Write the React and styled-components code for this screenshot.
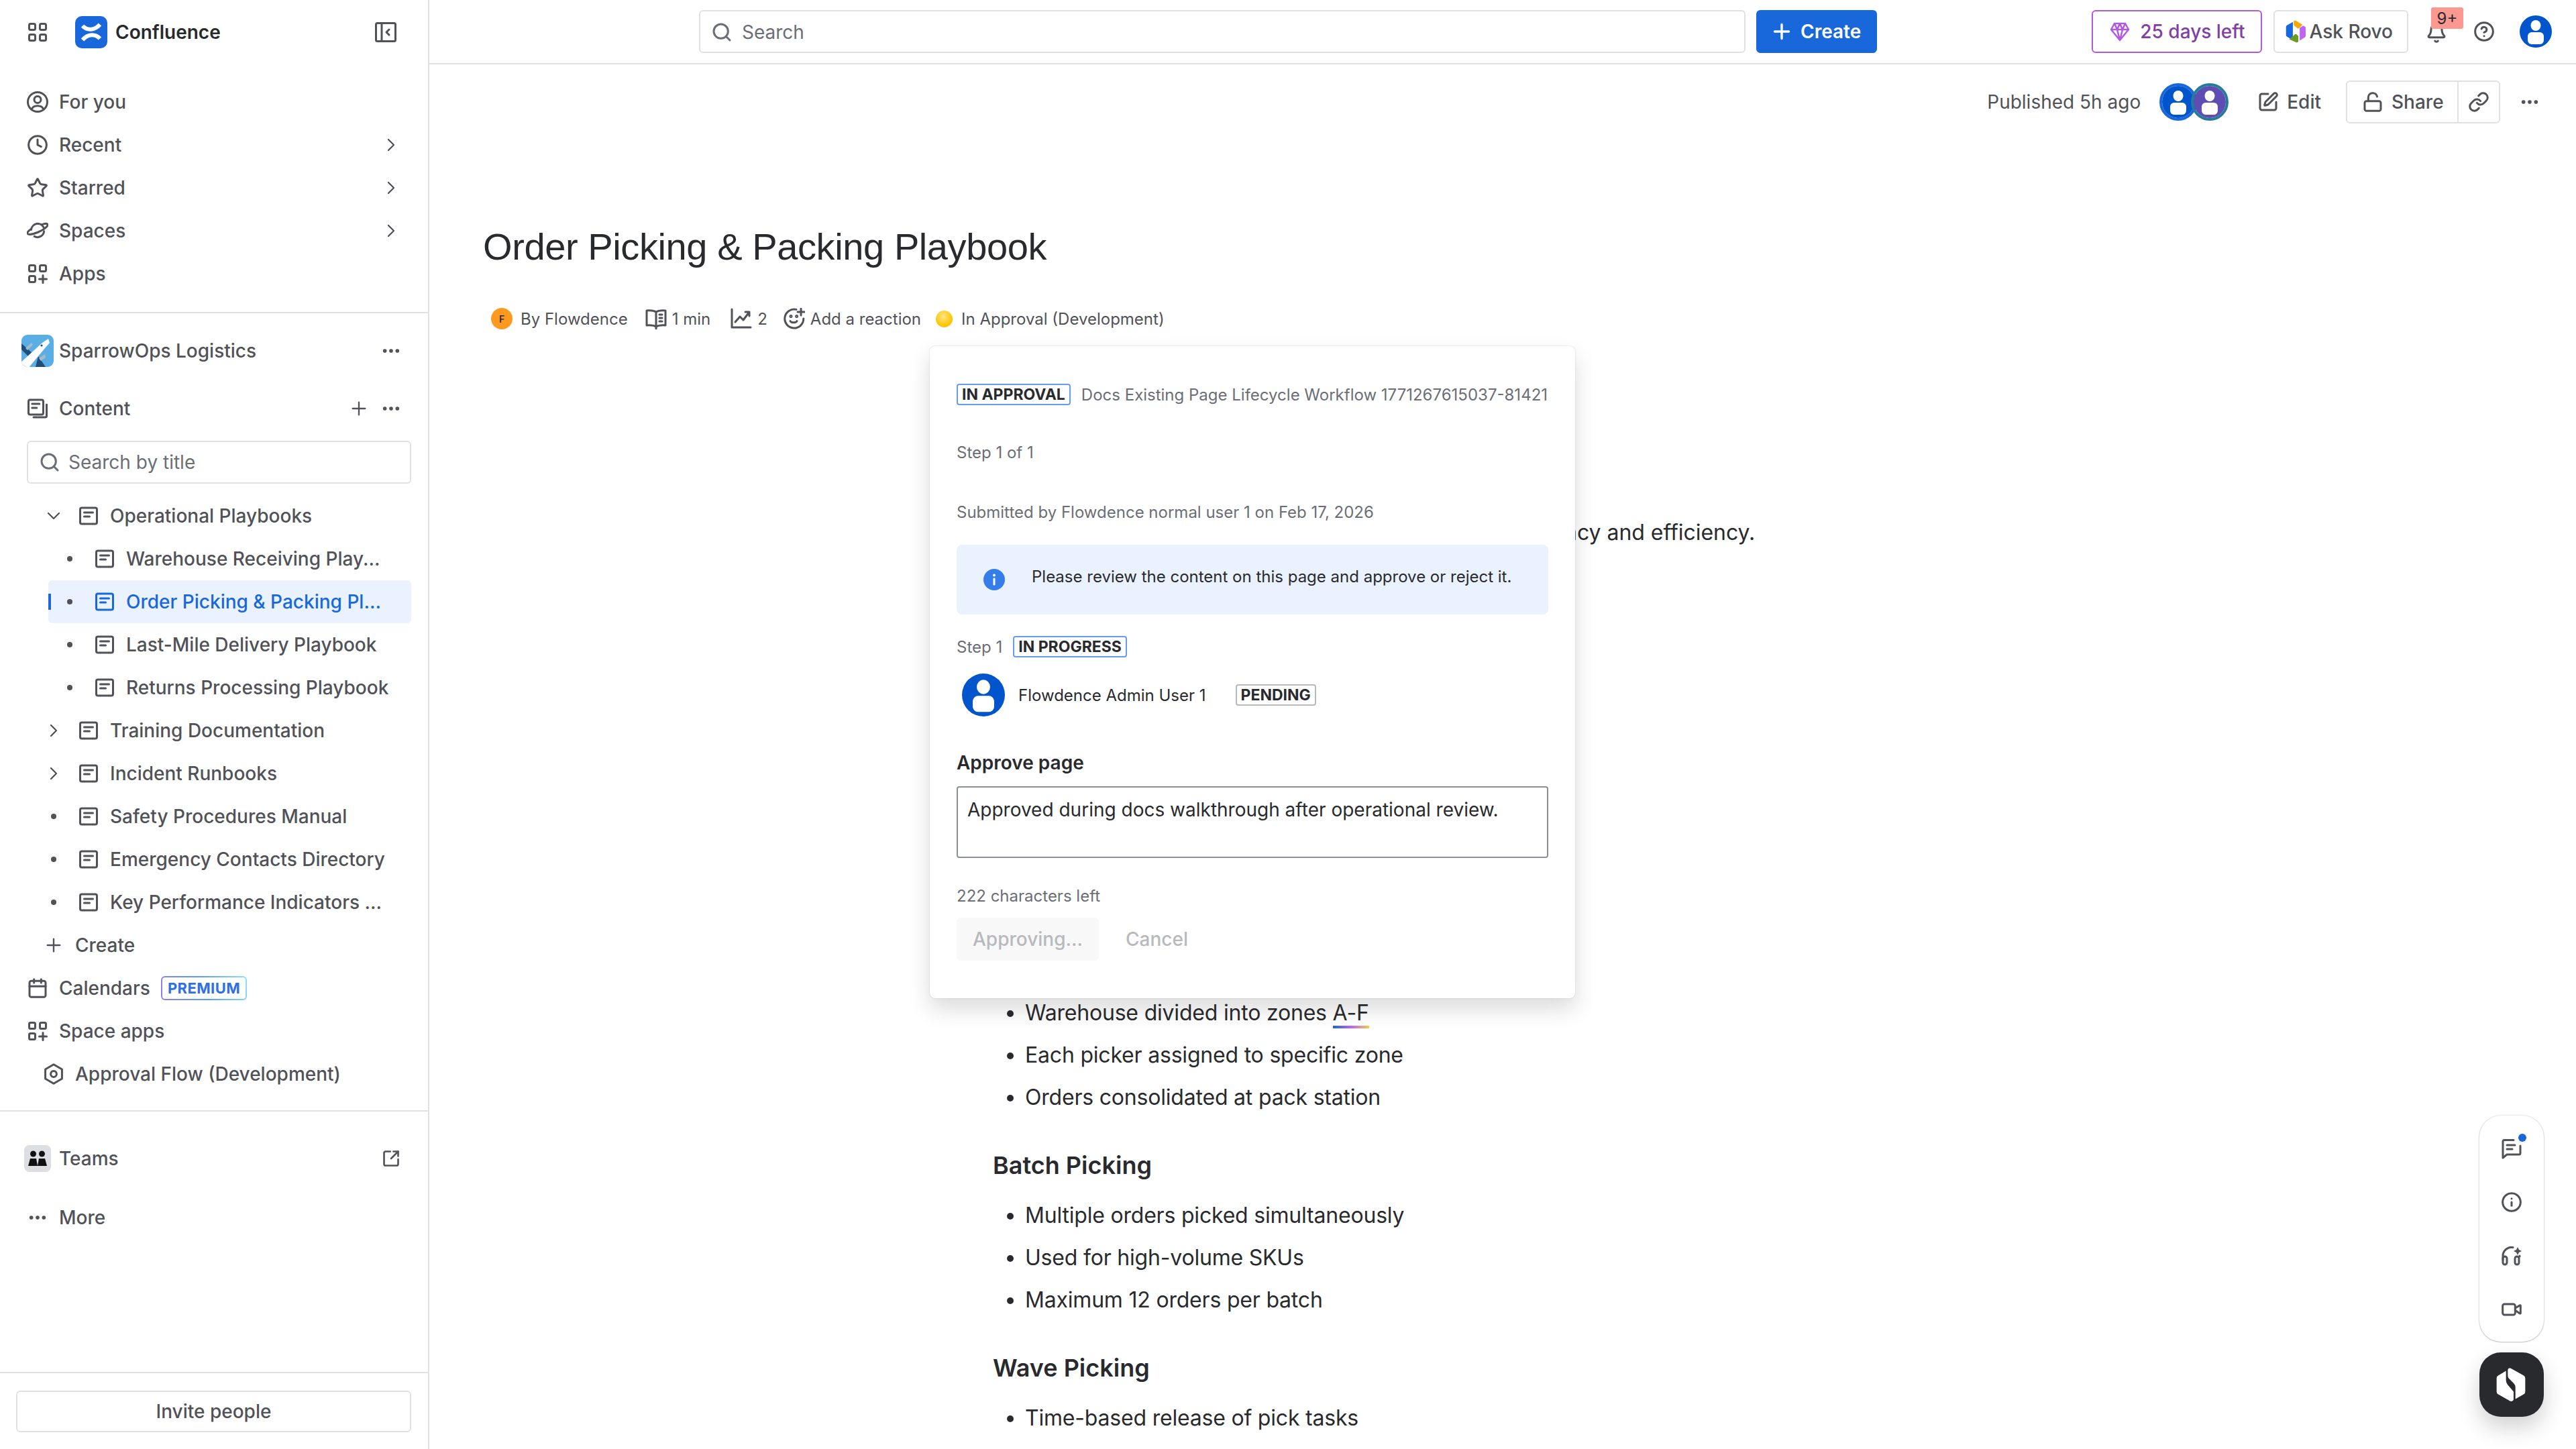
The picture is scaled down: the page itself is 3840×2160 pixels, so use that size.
import React from "react";
import styled, { createGlobalStyle } from "styled-components";
import {
  Bell,
  Calendar,
  ChevronDown,
  ChevronRight,
  CircleHelp,
  Clock,
  Ellipsis,
  Info,
  Link,
  LockOpen,
  Plus,
  Search,
  SquareArrowOutUpRight,
  SquarePen,
  Star,
  Video,
} from "lucide-react";

const GlobalStyle = createGlobalStyle`
  html, body {
    margin: 0;
    background: #fff;
  }
  body {
    font-family: Inter, "Noto Sans", sans-serif;
    color: #292a2e;
  }
  * {
    box-sizing: border-box;
  }
`;

const Shell = styled.div`
  display: flex;
  width: 3840px;
  height: 2160px;
  overflow: hidden;
`;

/* ---- sidebar ---- */
const Sidebar = styled.aside`
  display: flex;
  flex-direction: column;
  flex: 0 0 640px;
  height: 100%;
  border-right: 2px solid #dfe1e4;
  color: #505258;
  font-size: 28px;
  font-weight: 500;
`;

const Brand = styled.div`
  display: flex;
  align-items: center;
  height: 96px;
  padding: 0 47px 0 40px;
`;

const LogoName = styled.span`
  margin-left: 12px;
  font-size: 28px;
  font-weight: 600;
  color: #292a2e;
`;

const LogoBox = styled.svg`
  width: 48px;
  height: 48px;
  margin-left: 40px;
`;

const Spacer = styled.div`
  flex: 1;
`;

const NavList = styled.nav`
  padding-top: 24px;
  padding-bottom: 25px;
  border-bottom: 2px solid #dfe1e4;
`;

const Row = styled.div`
  display: flex;
  align-items: center;
  gap: 16px;
  height: 64px;
  padding: 0 ${(p) => p.$right || 39}px 0 ${(p) => (p.$sub ? 64 : 40)}px;
  white-space: nowrap;
`;

const RowEnd = styled.span`
  display: flex;
  gap: 16px;
  margin-left: auto;
`;

const SpaceBlock = styled.div`
  padding-top: 24px;
  flex: 0 0 1190px;
  border-bottom: 2px solid #dfe1e4;
`;

const SpaceRow = styled(Row)`
  padding-left: 32px;
  gap: 8px;
  margin-bottom: 22px;
`;

const TitleSearch = styled.div`
  display: flex;
  align-items: center;
  gap: 12px;
  height: 64px;
  margin: 16px 25px 16px 40px;
  padding: 0 16px;
  border: 2px solid #dfe1e4;
  border-radius: 6px;
  color: #6b6e76;
  font-weight: 400;
`;

const Tree = styled.div`
  padding: 0 25px 0 64px;
`;

const TreeRow = styled.div`
  position: relative;
  display: flex;
  align-items: center;
  height: 64px;
  padding-left: ${(p) => p.$depth * 24 + (p.$active ? -8 : 0)}px;
  margin-left: ${(p) => (p.$active ? 8 : 0)}px;
  border-radius: 6px;
  white-space: nowrap;
  background: ${(p) => (p.$active ? "#e9f2fe" : "transparent")};
  color: ${(p) => (p.$active ? "#1868db" : "inherit")};

  &::before {
    content: "";
    display: ${(p) => (p.$active ? "block" : "none")};
    position: absolute;
    left: 0;
    top: 20px;
    width: 4px;
    height: 24px;
    background: #1868db;
  }
`;

const TreeSlot = styled.span`
  display: flex;
  align-items: center;
  justify-content: center;
  width: 32px;
  margin-right: 20px;
  color: #505258;
`;

const Dot = styled.i`
  width: 8px;
  height: 8px;
  border-radius: 50%;
  background: #505258;
`;

const TreeText = styled.span`
  margin-left: 16px;
`;

const CreateRow = styled(TreeRow)`
  gap: 16px;
`;

const Premium = styled.span`
  display: inline-flex;
  align-items: center;
  height: 36px;
  padding: 0 8px;
  border: 2px solid transparent;
  border-radius: 6px;
  background: linear-gradient(#fff, #fff) padding-box,
    linear-gradient(70deg, #8f7ee7, #579dff 50%, #8be3f5) border-box;
  font-size: 22px;
  font-weight: 700;
  letter-spacing: 0.4px;
  color: #2f6fe8;
`;

const BottomBlock = styled.div`
  display: flex;
  flex-direction: column;
  flex: 1;
  padding-top: 38px;
`;

const TeamsBadge = styled.span`
  display: flex;
  align-items: center;
  justify-content: center;
  width: 40px;
  height: 40px;
  margin: 0 -4px;
  border-radius: 8px;
  background: #dddee1;
`;

const MoreRow = styled(Row)`
  margin-top: 24px;
`;

const InviteBar = styled.div`
  margin-top: auto;
  padding: 26px 25px 25px 24px;
  border-top: 2px solid #dfe1e4;
`;

const OutlineButton = styled.div`
  display: flex;
  align-items: center;
  justify-content: center;
  height: 62px;
  border: 2px solid #dfe1e4;
  border-radius: 6px;
  color: #505258;
`;

/* ---- main ---- */
const Main = styled.main`
  position: relative;
  flex: 1;
  min-width: 0;
`;

const TopBar = styled.header`
  display: flex;
  align-items: center;
  height: 96px;
  padding: 0 36px 0 402px;
  border-bottom: 2px solid #dfe1e4;
`;

const GlobalSearch = styled.div`
  display: flex;
  align-items: center;
  gap: 14px;
  width: 1560px;
  height: 64px;
  padding: 2px 16px 0;
  border: 2px solid #dfe1e4;
  border-radius: 6px;
  color: #6b6e76;
  font-size: 28px;
`;

const CreateButton = styled.div`
  display: flex;
  align-items: center;
  gap: 10px;
  width: 180px;
  height: 64px;
  margin-left: 16px;
  padding-left: 20px;
  border-radius: 6px;
  background: #1868db;
  color: #fff;
  font-size: 28px;
  font-weight: 600;
`;

const TopActions = styled.div`
  display: flex;
  align-items: center;
  margin-left: auto;
`;

const TopButton = styled.div`
  display: flex;
  align-items: center;
  gap: ${(p) => p.$gap}px;
  height: 64px;
  padding: 0 ${(p) => p.$right}px 0 ${(p) => p.$left}px;
  margin-right: 17px;
  border: 2px solid ${(p) => (p.$trial ? "#af59e1" : "#dfe1e4")};
  border-radius: 6px;
  color: ${(p) => (p.$trial ? "#803fa5" : "#505258")};
  font-size: 28px;
  font-weight: 500;
  white-space: nowrap;
`;

const BellWrap = styled.span`
  position: relative;
  display: flex;
  margin: 4px 39px 0 9px;
  color: #505258;
`;

const BellBadge = styled.span`
  position: absolute;
  left: 8px;
  top: -22px;
  display: flex;
  align-items: center;
  justify-content: center;
  width: 48px;
  height: 32px;
  background: #fd9891;
  border-radius: 3px;
  color: #292a2e;
  font-size: 24px;
`;

const HelpIcon = styled.span`
  display: flex;
  margin-right: 37px;
  color: #505258;
`;

const PageActions = styled.div`
  display: flex;
  align-items: center;
  justify-content: flex-end;
  height: 64px;
  margin-top: 24px;
  padding-right: 53px;
  color: #505258;
  font-size: 28px;
  font-weight: 400;
`;

const Avatars = styled.div`
  display: flex;
  margin: 0 43px 0 28px;
`;

const AvatarRing = styled.span`
  display: flex;
  width: 56px;
  height: 56px;
  border-radius: 50%;
  border: 4px solid ${(p) => p.$ring};
  margin-left: ${(p) => (p.$second ? -9 : 0)}px;
`;

const EditAction = styled.div`
  display: flex;
  align-items: center;
  gap: 12px;
  margin-right: 37px;
  font-weight: 500;
`;

const ShareGroup = styled.div`
  display: flex;
  align-items: center;
  width: 230px;
  height: 64px;
  border: 2px solid #dfe1e4;
  border-radius: 6px;
  font-weight: 500;
`;

const ShareMain = styled.div`
  display: flex;
  align-items: center;
  gap: 12px;
  width: 166px;
  height: 100%;
  padding-left: 22px;
  border-right: 2px solid #dfe1e4;
`;

const ShareLink = styled.div`
  display: flex;
  justify-content: center;
  flex: 1;
`;

const MoreAction = styled.div`
  display: flex;
  margin-left: 28px;
`;

const Article = styled.article`
  padding-left: 80px;
`;

const Title = styled.h1`
  margin: 148px 0 0;
  font-size: 56px;
  line-height: 72px;
  font-weight: 400;
  letter-spacing: -0.4px;
  color: #292a2e;
  font-family: "Liberation Sans", Arial, sans-serif;
`;

const Meta = styled.div`
  display: flex;
  align-items: center;
  height: 40px;
  margin-top: 51px;
  padding-left: 12px;
  color: #505258;
  font-size: 24px;
  white-space: nowrap;
`;

const MetaItem = styled.span`
  display: flex;
  align-items: center;
  gap: ${(p) => p.$gap}px;
  margin-right: ${(p) => p.$after}px;
`;

const AuthorDot = styled.span`
  display: flex;
  align-items: center;
  justify-content: center;
  width: 32px;
  height: 32px;
  border-radius: 50%;
  background: #ff991f;
  color: #292a2e;
  font-size: 14px;
  font-weight: 600;
`;

const StatusDot = styled.span`
  width: 25px;
  height: 25px;
  border-radius: 50%;
  background: radial-gradient(circle at 45% 35%, #ffe680, #fcc400 65%);
`;

const Body = styled.div`
  margin-left: 760px;
  font-size: 32px;
  line-height: 48px;
  letter-spacing: -0.2px;
  color: #292a2e;
`;

const Intro = styled.p`
  margin: 275px 0 0;
  white-space: nowrap;
  letter-spacing: -0.04px;
`;

const BulletList = styled.ul`
  margin: ${(p) => p.$top}px 0 0;
  padding: 0 0 0 48px;
  list-style: disc;
`;

const BulletItem = styled.li`
  height: 63px;
  padding-top: 7px;
`;

const Section = styled.h2`
  margin: ${(p) => p.$top}px 0 0;
  font-size: 36px;
  line-height: 48px;
  font-weight: 600;
  letter-spacing: 0;
`;

const Spell = styled.span`
  position: relative;

  &::after {
    content: "";
    position: absolute;
    left: 0;
    right: 0;
    bottom: -4px;
    height: 4px;
    background: linear-gradient(90deg, #1868db, #bf63f3 50%, #f5cd47);
  }
`;

/* ---- approval popup ---- */
const Popup = styled.section`
  position: absolute;
  left: 746px;
  top: 516px;
  width: 962px;
  height: 972px;
  padding: 56px 40px;
  border-radius: 8px;
  background: #fff;
  box-shadow: 0 0 2px rgba(30, 31, 33, 0.2), 0 16px 32px rgba(30, 31, 33, 0.16);
  font-size: 24px;
  color: #6b6e76;
`;

const FlexLine = styled.div`
  display: flex;
  align-items: center;
  gap: ${(p) => p.$gap}px;
  margin-top: ${(p) => p.$top || 0}px;
  white-space: nowrap;
`;

const Lozenge = styled.span`
  display: inline-flex;
  align-items: center;
  height: 32px;
  padding: 0 6px;
  margin-left: ${(p) => p.$shift || 0}px;
  border: 2px solid ${(p) => (p.$neutral ? "#b7b9be" : "#669df1")};
  border-radius: 4px;
  color: #292a2e;
  font-size: 23px;
  font-weight: 700;
`;

const Note = styled.div`
  margin-top: ${(p) => p.$top}px;
  line-height: 36px;
`;

const InfoPanel = styled.div`
  display: flex;
  align-items: flex-start;
  gap: 40px;
  height: 104px;
  margin-top: 30px;
  padding: 28px 40px 0;
  border-radius: 8px;
  background: #e9f2fe;
  color: #292a2e;
  line-height: 40px;
  white-space: nowrap;
`;

const InfoDot = styled.span`
  display: flex;
  margin-top: 8px;
`;

const ApproverRow = styled(FlexLine)`
  height: 64px;
  padding-left: 8px;
  color: #292a2e;
`;

const PopupHeading = styled.div`
  margin-top: 49px;
  font-size: 28px;
  line-height: 40px;
  font-weight: 600;
  color: #292a2e;
`;

const CommentBox = styled.div`
  height: 107px;
  margin-top: 15px;
  padding: 13px 14px;
  border: 2px solid #8c8f97;
  border-radius: 4px;
  color: #292a2e;
  font-size: 28px;
  line-height: 40px;
`;

const PopupActions = styled.div`
  display: flex;
  align-items: center;
  margin-top: 14px;
  color: #b7b9be;
  font-size: 28px;
  font-weight: 500;
`;

const DisabledButton = styled.div`
  display: flex;
  align-items: center;
  justify-content: center;
  width: 212px;
  height: 64px;
  margin-right: 40px;
  border-radius: 6px;
  background: #f8f8f8;
`;

/* ---- floating tools ---- */
const ToolRail = styled.div`
  position: absolute;
  right: 48px;
  top: 1663px;
  display: flex;
  flex-direction: column;
  align-items: center;
  width: 96px;
  height: 337px;
  padding-top: 9px;
  border-radius: 32px;
  background: #fff;
  box-shadow: 0 0 2px rgba(30, 31, 33, 0.3), 0 1px 2px rgba(30, 31, 33, 0.2);
  color: #505258;
`;

const Tool = styled.span`
  position: relative;
  display: flex;
  align-items: center;
  justify-content: center;
  height: 80px;
`;

const ToolDot = styled.i`
  position: absolute;
  right: -6px;
  top: 18px;
  width: 12px;
  height: 12px;
  border-radius: 50%;
  background: #1868db;
`;

const RovoFab = styled.div`
  position: absolute;
  right: 48px;
  top: 2016px;
  display: flex;
  align-items: center;
  justify-content: center;
  width: 96px;
  height: 96px;
  border-radius: 32px;
  background: #292a2e;
  box-shadow: 0 16px 32px rgba(30, 31, 33, 0.2);
`;

/* ---- icons ---- */
const Glyph = styled.svg`
  flex: none;
  width: ${(p) => p.$size || 32}px;
  height: ${(p) => p.$size || 32}px;
  fill: none;
  stroke: currentColor;
  stroke-width: 1.5;
  stroke-linecap: round;
  stroke-linejoin: round;
`;

const DiamondGlyph = styled(Glyph)`
  stroke: #af59e1;
  stroke-width: 2.5;
`;

const Icon16 = ({ children, size }) => (
  <Glyph viewBox="0 0 16 16" $size={size}>
    {children}
  </Glyph>
);

const GridIcon = () => (
  <Icon16>
    <rect x="1.75" y="1.75" width="4.5" height="4.5" rx="1" />
    <rect x="9.75" y="1.75" width="4.5" height="4.5" rx="1" />
    <rect x="1.75" y="9.75" width="4.5" height="4.5" rx="1" />
    <rect x="9.75" y="9.75" width="4.5" height="4.5" rx="1" />
  </Icon16>
);

const AppsIcon = () => (
  <Icon16>
    <rect x="1.75" y="1.75" width="4.5" height="4.5" rx="1" />
    <rect x="9.75" y="1.75" width="4.5" height="4.5" rx="1" />
    <rect x="1.75" y="9.75" width="4.5" height="4.5" rx="1" />
    <path d="M12 9.25v5.5M9.25 12h5.5" />
  </Icon16>
);

const PanelIcon = () => (
  <Icon16>
    <rect x="0.75" y="1.25" width="14.5" height="13.5" rx="1" />
    <path d="M5 1.25v13.5M10.5 6 8.5 8l2 2" />
  </Icon16>
);

const UserCircleIcon = () => (
  <Icon16>
    <circle cx="8" cy="8" r="7.25" />
    <circle cx="8" cy="6.2" r="2.5" />
    <path d="M3.6 13.5c.6-1.7 2.3-2.6 4.4-2.6s3.8.9 4.4 2.6" />
  </Icon16>
);

const PlanetIcon = () => (
  <Icon16>
    <path d="M3.3 7.2a4.9 4.9 0 0 1 9.3-1.7M12.8 8.4a4.9 4.9 0 0 1-7.2 3.8" />
    <path d="M11 3.4c2.4-.9 4.2-.9 4.5-.1.5 1.3-2.7 3.9-7 5.7-4.4 1.8-7.5 2.2-8 1-.3-.8.7-2 2.6-3.3" />
  </Icon16>
);

const PageIcon = () => (
  <Icon16>
    <rect x="1.75" y="2" width="12.5" height="12" rx="1.2" />
    <path d="M4.75 5.5h6.5M4.75 8.5h4" />
  </Icon16>
);

const ContentIcon = () => (
  <Icon16>
    <rect x="1.25" y="1.5" width="11" height="11" rx="1.2" />
    <path d="M3.9 4.5h5.5M3.9 7.5h3.5M14.75 5v8.5a1 1 0 0 1-1 1H5" />
  </Icon16>
);

const HexIcon = () => (
  <Icon16>
    <path d="M8 .9 14.2 4.5v7L8 15.1 1.8 11.5v-7z" />
    <circle cx="8" cy="8" r="2.2" />
  </Icon16>
);

const TeamsIcon = () => (
  <svg width="28" height="24" viewBox="0 0 28 24" fill="#111">
    <circle cx="7.5" cy="5" r="4.5" />
    <circle cx="20.5" cy="5" r="4.5" />
    <path d="M3 12h9l2 11H0zM16 12h9l3 11H14z" />
  </svg>
);

const ConfluenceLogo = () => (
  <LogoBox viewBox="0 0 48 48">
    <rect width="48" height="48" rx="10" fill="#1868db" />
    <path
      d="M11 14.5C18 22 29 21.5 37 12.5M11 35.5C19 26.5 30 26 37 33.5"
      fill="none"
      stroke="#fff"
      strokeWidth="6"
    />
  </LogoBox>
);

const SpaceLogo = () => (
  <svg width="48" height="48" viewBox="0 0 48 48">
    <clipPath id="space-clip">
      <rect width="48" height="48" rx="9" />
    </clipPath>
    <g clipPath="url(#space-clip)">
      <rect width="48" height="48" fill="#5aaee6" />
      <path d="M0 13 18 29 10 32 0 22zM25 32 36 48H21z" fill="#1d4f7a" />
      <path d="M-2 42 31 12 40 6 42 12 35 20 10 50z" fill="#fff" />
      <path d="M6 20 15 12 17 15 9 23zM26 35 35 29 36 34 29 39z" fill="#a9b9c6" />
      <circle cx="30" cy="16" r="1.6" fill="#1d4f7a" />
    </g>
  </svg>
);

const DiamondIcon = () => (
  <DiamondGlyph viewBox="0 0 32 32">
    <path d="M8 4h16l5 9-13 16L3 13zM3 13h26M12 13l4 16 4-16M8 4l4 9 4-9 4 9 4-9" />
  </DiamondGlyph>
);

const RovoLogo = () => (
  <svg width="30" height="34" viewBox="30 22 88 100">
    <path d="M62 30 36 45Q32 48 32 52V88Q32 92 36 94L52 104 62 94V50Z" fill="#1868db" />
    <path d="M66 26Q70 22 76 25L104 42 88 58Q84 60 80 56L66 44Z" fill="#fca700" />
    <path d="M92 56 108 46 114 50Q118 52 118 56V92Q118 96 114 98L92 112Z" fill="#bf63f3" />
    <path d="M46 106 72 84Q76 82 80 86L86 92V116Q82 122 74 118Z" fill="#6a9a23" />
  </svg>
);

const Person = ({ size, fill }) => (
  <svg width={size} height={size} viewBox="0 0 48 48">
    <circle cx="24" cy="24" r="24" fill={fill} />
    <ellipse cx="24" cy="15" rx="7.5" ry="8" fill="#fff" />
    <rect x="12" y="25" width="24" height="18" rx="6" fill="#fff" />
  </svg>
);

const ReadIcon = () => (
  <Icon16>
    <path d="M8 3.2C6.5 2 3.5 1.8 1 2v11c2.5-.2 5.5 0 7 1.2 1.5-1.2 4.5-1.4 7-1.2V2c-2.5-.2-5.5 0-7 1.2zM8 3.2v12.3M10.500 5h2M10.500 7.500h2M10.500 10h2" />
  </Icon16>
);

const StatsIcon = () => (
  <Icon16>
    <path d="M1 1v13.5h14M3.5 10.5l3.5-4 2.5 2.5 4.5-6M11 3h3v3" />
  </Icon16>
);

const SmileAddIcon = () => (
  <Icon16>
    <path d="M9.5 1.2A7 7 0 1 0 14.9 8" />
    <path d="M5 9.8c.7 1.5 4.3 1.5 5 0M13 .5v5M10.5 3h5" />
    <circle cx="5.5" cy="6.3" r=".5" />
    <circle cx="9.8" cy="6.3" r=".5" />
  </Icon16>
);

const HeadsetIcon = () => (
  <Icon16>
    <path d="M1.5 11V8.5A6.5 6.5 0 0 1 9 1.7" />
    <rect x="1.5" y="8.5" width="3" height="6" rx="1.5" />
    <rect x="10.5" y="8.5" width="3" height="6" rx="1.5" />
    <path d="M14 8.5V8" />
    <path d="M12.5 1.5l1 2 2 1-2 1-1 2-1-2-2-1 2-1z" fill="currentColor" stroke="none" />
  </Icon16>
);

const CommentIcon = () => (
  <Icon16>
    <path d="M9.5 1.75H2.5a1 1 0 0 0-1 1V15l3-2.500h9a1 1 0 0 0 1-1V6" />
    <path d="M4.5 5.5h6M4.5 8.5h4" />
  </Icon16>
);

const RovoMark = () => (
  <svg width="50" height="57" viewBox="0 20 150 170" fill="#fff">
    <path d="M50 42 14 64Q8 68 8 75V135Q8 142 14 146L68 177Q80 182 84 170V135L58 105Q50 95 50 85Z" />
    <path d="M58 40Q58 28 70 30L128 62Q136 66 136 75V135Q136 142 130 146L92 168V115Q92 105 85 98L62 75Q58 70 58 62Z" />
  </svg>
);

const ICON = { size: 32, strokeWidth: 2.25 };

const navItems = [
  { label: "For you", icon: <UserCircleIcon /> },
  { label: "Recent", icon: <Clock {...ICON} />, more: true },
  { label: "Starred", icon: <Star {...ICON} />, more: true },
  { label: "Spaces", icon: <PlanetIcon />, more: true },
  { label: "Apps", icon: <AppsIcon /> },
];

const treeItems = [
  { label: "Operational Playbooks", depth: 0, mark: "open" },
  { label: "Warehouse Receiving Play...", depth: 1, mark: "dot" },
  { label: "Order Picking & Packing Pl...", depth: 1, mark: "dot", active: true },
  { label: "Last-Mile Delivery Playbook", depth: 1, mark: "dot" },
  { label: "Returns Processing Playbook", depth: 1, mark: "dot" },
  { label: "Training Documentation", depth: 0, mark: "closed" },
  { label: "Incident Runbooks", depth: 0, mark: "closed" },
  { label: "Safety Procedures Manual", depth: 0, mark: "dot" },
  { label: "Emergency Contacts Directory", depth: 0, mark: "dot" },
  { label: "Key Performance Indicators ...", depth: 0, mark: "dot" },
];

const sections = [
  {
    heading: "Batch Picking",
    top: 45,
    listTop: 20,
    items: [
      "Multiple orders picked simultaneously",
      "Used for high-volume SKUs",
      "Maximum 12 orders per batch",
    ],
  },
  {
    heading: "Wave Picking",
    top: 45,
    listTop: 20,
    items: ["Time-based release of pick tasks"],
  },
];

const TreeMark = ({ mark }) => {
  if (mark === "open") return <ChevronDown size={32} strokeWidth={1.75} />;
  if (mark === "closed") return <ChevronRight size={32} strokeWidth={1.75} />;
  return <Dot />;
};

const App = () => {
  return (
    <Shell>
      <GlobalStyle />
      <Sidebar>
        <Brand>
          <GridIcon />
          <ConfluenceLogo />
          <LogoName>Confluence</LogoName>
          <Spacer />
          <PanelIcon />
        </Brand>

        <NavList>
          {navItems.map((item) => (
            <Row key={item.label}>
              {item.icon}
              {item.label}
              {item.more && (
                <RowEnd>
                  <ChevronRight size={32} strokeWidth={1.75} />
                </RowEnd>
              )}
            </Row>
          ))}
        </NavList>

        <SpaceBlock>
          <SpaceRow>
            <SpaceLogo />
            SparrowOps Logistics
            <RowEnd>
              <Ellipsis {...ICON} />
            </RowEnd>
          </SpaceRow>
          <Row>
            <ContentIcon />
            Content
            <RowEnd>
              <Plus size={32} strokeWidth={1.75} />
              <Ellipsis {...ICON} />
            </RowEnd>
          </Row>
          <TitleSearch>
            <Search {...ICON} />
            Search by title
          </TitleSearch>
          <Tree>
            {treeItems.map((item) => (
              <TreeRow key={item.label} $depth={item.depth} $active={item.active}>
                <TreeSlot>
                  <TreeMark mark={item.mark} />
                </TreeSlot>
                <PageIcon />
                <TreeText>{item.label}</TreeText>
              </TreeRow>
            ))}
            <CreateRow $depth={0}>
              <Plus size={32} strokeWidth={1.75} />
              Create
            </CreateRow>
          </Tree>
          <Row>
            <Calendar {...ICON} />
            Calendars
            <Premium>PREMIUM</Premium>
          </Row>
          <Row>
            <AppsIcon />
            Space apps
          </Row>
          <Row $sub>
            <HexIcon />
            Approval Flow (Development)
          </Row>
        </SpaceBlock>

        <BottomBlock>
          <Row $right={41}>
            <TeamsBadge>
              <TeamsIcon />
            </TeamsBadge>
            Teams
            <RowEnd>
              <SquareArrowOutUpRight size={28} strokeWidth={2.25} />
            </RowEnd>
          </Row>
          <MoreRow>
            <Ellipsis {...ICON} />
            More
          </MoreRow>
          <InviteBar>
            <OutlineButton>Invite people</OutlineButton>
          </InviteBar>
        </BottomBlock>
      </Sidebar>

      <Main>
        <TopBar>
          <GlobalSearch>
            <Search {...ICON} />
            Search
          </GlobalSearch>
          <CreateButton>
            <Plus size={36} strokeWidth={2.25} />
            Create
          </CreateButton>
          <TopActions>
            <TopButton $trial $left={24} $right={24} $gap={14}>
              <DiamondIcon />
              25 days left
            </TopButton>
            <TopButton $left={16} $right={21} $gap={5}>
              <RovoLogo />
              Ask Rovo
            </TopButton>
            <BellWrap>
              <Bell {...ICON} />
              <BellBadge>9+</BellBadge>
            </BellWrap>
            <HelpIcon>
              <CircleHelp {...ICON} />
            </HelpIcon>
            <Person size={48} fill="#0055cc" />
          </TopActions>
        </TopBar>

        <PageActions>
          Published 5h ago
          <Avatars>
            <AvatarRing $ring="#1868db">
              <Person size={48} fill="#0055cc" />
            </AvatarRing>
            <AvatarRing $ring="#227d9b" $second>
              <Person size={48} fill="#5e4db2" />
            </AvatarRing>
          </Avatars>
          <EditAction>
            <SquarePen {...ICON} />
            Edit
          </EditAction>
          <ShareGroup>
            <ShareMain>
              <LockOpen {...ICON} />
              Share
            </ShareMain>
            <ShareLink>
              <Link {...ICON} />
            </ShareLink>
          </ShareGroup>
          <MoreAction>
            <Ellipsis {...ICON} />
          </MoreAction>
        </PageActions>

        <Article>
          <Title>Order Picking &amp; Packing Playbook</Title>
          <Meta>
            <MetaItem $gap={12} $after={26}>
              <AuthorDot>F</AuthorDot>
              By Flowdence
            </MetaItem>
            <MetaItem $gap={8} $after={30}>
              <ReadIcon />
              1 min
            </MetaItem>
            <MetaItem $gap={8} $after={24}>
              <StatsIcon />2
            </MetaItem>
            <MetaItem $gap={8} $after={22}>
              <SmileAddIcon />
              Add a reaction
            </MetaItem>
            <MetaItem $gap={13} $after={0}>
              <StatusDot />
              In Approval (Development)
            </MetaItem>
          </Meta>

          <Body>
            <Intro>This guide covers picking and packing orders with accuracy and efficiency.</Intro>
            <BulletList $top={661}>
              <BulletItem>
                Warehouse divided into zones <Spell>A-F</Spell>
              </BulletItem>
              <BulletItem>Each picker assigned to specific zone</BulletItem>
              <BulletItem>Orders consolidated at pack station</BulletItem>
            </BulletList>
            {sections.map((section) => (
              <React.Fragment key={section.heading}>
                <Section $top={section.top}>{section.heading}</Section>
                <BulletList $top={section.listTop}>
                  {section.items.map((text) => (
                    <BulletItem key={text}>{text}</BulletItem>
                  ))}
                </BulletList>
              </React.Fragment>
            ))}
          </Body>
        </Article>

        <Popup>
          <FlexLine $gap={16}>
            <Lozenge>IN APPROVAL</Lozenge>
            Docs Existing Page Lifecycle Workflow 1771267615037-81421
          </FlexLine>
          <Note $top={53}>Step 1 of 1</Note>
          <Note $top={53}>Submitted by Flowdence normal user 1 on Feb 17, 2026</Note>
          <InfoPanel>
            <InfoDot>
              <svg width="32" height="32" viewBox="0 0 32 32">
                <circle cx="16" cy="16" r="16" fill="#357de8" />
                <circle cx="16" cy="9.5" r="2" fill="#fff" />
                <rect x="14.5" y="13.5" width="3" height="11" rx="1" fill="#fff" />
              </svg>
            </InfoDot>
            Please review the content on this page and approve or reject it.
          </InfoPanel>
          <FlexLine $gap={16} $top={32}>
            Step 1
            <Lozenge>IN PROGRESS</Lozenge>
          </FlexLine>
          <ApproverRow $gap={20} $top={24}>
            <Person size={64} fill="#0055cc" />
            Flowdence Admin User 1
            <Lozenge $neutral $shift={24}>
              PENDING
            </Lozenge>
          </ApproverRow>
          <PopupHeading>Approve page</PopupHeading>
          <CommentBox>Approved during docs walkthrough after operational review.</CommentBox>
          <Note $top={39}>222 characters left</Note>
          <PopupActions>
            <DisabledButton>Approving...</DisabledButton>
            Cancel
          </PopupActions>
        </Popup>

        <ToolRail>
          <Tool>
            <CommentIcon />
            <ToolDot />
          </Tool>
          <Tool>
            <Info {...ICON} />
          </Tool>
          <Tool>
            <HeadsetIcon />
          </Tool>
          <Tool>
            <Video {...ICON} />
          </Tool>
        </ToolRail>
        <RovoFab>
          <RovoMark />
        </RovoFab>
      </Main>
    </Shell>
  );
};

export default App;
